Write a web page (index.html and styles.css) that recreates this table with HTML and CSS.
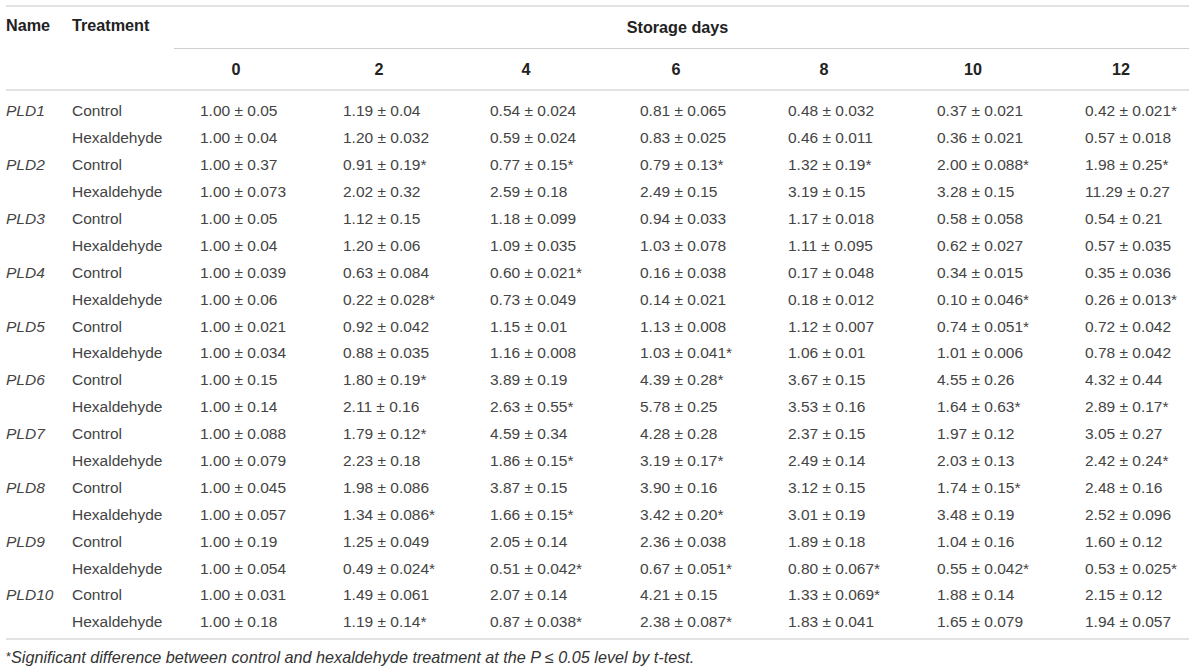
FILE: index.html
```html
<!DOCTYPE html>
<html lang="en">

<head>
    <meta charset="UTF-8">
    <meta name="viewport" content="width=device-width, initial-scale=1.0">
    <title>PLD expression during storage</title>
    <link rel="stylesheet" href="styles.css">
</head>

<body>
    <div class="container">
        <table class="data-table">
            <colgroup>
                <col class="col-name">
                <col class="col-treat">
                <col class="col-d0">
                <col class="col-d2">
                <col class="col-d4">
                <col class="col-d6">
                <col class="col-d8">
                <col class="col-d10">
                <col class="col-d12">
            </colgroup>
            <thead>
                <tr class="head-top">
                    <th class="name" rowspan="2">Name</th>
                    <th class="treat" rowspan="2">Treatment</th>
                    <th class="group" colspan="7">Storage days</th>
                </tr>
                <tr class="head-days">
                    <th class="day"><span>0</span></th>
                    <th class="day"><span>2</span></th>
                    <th class="day"><span>4</span></th>
                    <th class="day"><span>6</span></th>
                    <th class="day"><span>8</span></th>
                    <th class="day"><span>10</span></th>
                    <th class="day"><span>12</span></th>
                </tr>
            </thead>
            <tbody>
                <tr class="first">
                    <td class="gene">PLD1</td><td class="treat">Control</td>
                    <td>1.00 ± 0.05</td><td>1.19 ± 0.04</td><td>0.54 ± 0.024</td><td>0.81 ± 0.065</td><td>0.48 ± 0.032</td><td>0.37 ± 0.021</td><td>0.42 ± 0.021*</td>
                </tr>
                <tr>
                    <td class="gene"></td><td class="treat">Hexaldehyde</td>
                    <td>1.00 ± 0.04</td><td>1.20 ± 0.032</td><td>0.59 ± 0.024</td><td>0.83 ± 0.025</td><td>0.46 ± 0.011</td><td>0.36 ± 0.021</td><td>0.57 ± 0.018</td>
                </tr>
                <tr>
                    <td class="gene">PLD2</td><td class="treat">Control</td>
                    <td>1.00 ± 0.37</td><td>0.91 ± 0.19*</td><td>0.77 ± 0.15*</td><td>0.79 ± 0.13*</td><td>1.32 ± 0.19*</td><td>2.00 ± 0.088*</td><td>1.98 ± 0.25*</td>
                </tr>
                <tr>
                    <td class="gene"></td><td class="treat">Hexaldehyde</td>
                    <td>1.00 ± 0.073</td><td>2.02 ± 0.32</td><td>2.59 ± 0.18</td><td>2.49 ± 0.15</td><td>3.19 ± 0.15</td><td>3.28 ± 0.15</td><td>11.29 ± 0.27</td>
                </tr>
                <tr>
                    <td class="gene">PLD3</td><td class="treat">Control</td>
                    <td>1.00 ± 0.05</td><td>1.12 ± 0.15</td><td>1.18 ± 0.099</td><td>0.94 ± 0.033</td><td>1.17 ± 0.018</td><td>0.58 ± 0.058</td><td>0.54 ± 0.21</td>
                </tr>
                <tr>
                    <td class="gene"></td><td class="treat">Hexaldehyde</td>
                    <td>1.00 ± 0.04</td><td>1.20 ± 0.06</td><td>1.09 ± 0.035</td><td>1.03 ± 0.078</td><td>1.11 ± 0.095</td><td>0.62 ± 0.027</td><td>0.57 ± 0.035</td>
                </tr>
                <tr>
                    <td class="gene">PLD4</td><td class="treat">Control</td>
                    <td>1.00 ± 0.039</td><td>0.63 ± 0.084</td><td>0.60 ± 0.021*</td><td>0.16 ± 0.038</td><td>0.17 ± 0.048</td><td>0.34 ± 0.015</td><td>0.35 ± 0.036</td>
                </tr>
                <tr>
                    <td class="gene"></td><td class="treat">Hexaldehyde</td>
                    <td>1.00 ± 0.06</td><td>0.22 ± 0.028*</td><td>0.73 ± 0.049</td><td>0.14 ± 0.021</td><td>0.18 ± 0.012</td><td>0.10 ± 0.046*</td><td>0.26 ± 0.013*</td>
                </tr>
                <tr>
                    <td class="gene">PLD5</td><td class="treat">Control</td>
                    <td>1.00 ± 0.021</td><td>0.92 ± 0.042</td><td>1.15 ± 0.01</td><td>1.13 ± 0.008</td><td>1.12 ± 0.007</td><td>0.74 ± 0.051*</td><td>0.72 ± 0.042</td>
                </tr>
                <tr>
                    <td class="gene"></td><td class="treat">Hexaldehyde</td>
                    <td>1.00 ± 0.034</td><td>0.88 ± 0.035</td><td>1.16 ± 0.008</td><td>1.03 ± 0.041*</td><td>1.06 ± 0.01</td><td>1.01 ± 0.006</td><td>0.78 ± 0.042</td>
                </tr>
                <tr>
                    <td class="gene">PLD6</td><td class="treat">Control</td>
                    <td>1.00 ± 0.15</td><td>1.80 ± 0.19*</td><td>3.89 ± 0.19</td><td>4.39 ± 0.28*</td><td>3.67 ± 0.15</td><td>4.55 ± 0.26</td><td>4.32 ± 0.44</td>
                </tr>
                <tr>
                    <td class="gene"></td><td class="treat">Hexaldehyde</td>
                    <td>1.00 ± 0.14</td><td>2.11 ± 0.16</td><td>2.63 ± 0.55*</td><td>5.78 ± 0.25</td><td>3.53 ± 0.16</td><td>1.64 ± 0.63*</td><td>2.89 ± 0.17*</td>
                </tr>
                <tr>
                    <td class="gene">PLD7</td><td class="treat">Control</td>
                    <td>1.00 ± 0.088</td><td>1.79 ± 0.12*</td><td>4.59 ± 0.34</td><td>4.28 ± 0.28</td><td>2.37 ± 0.15</td><td>1.97 ± 0.12</td><td>3.05 ± 0.27</td>
                </tr>
                <tr>
                    <td class="gene"></td><td class="treat">Hexaldehyde</td>
                    <td>1.00 ± 0.079</td><td>2.23 ± 0.18</td><td>1.86 ± 0.15*</td><td>3.19 ± 0.17*</td><td>2.49 ± 0.14</td><td>2.03 ± 0.13</td><td>2.42 ± 0.24*</td>
                </tr>
                <tr>
                    <td class="gene">PLD8</td><td class="treat">Control</td>
                    <td>1.00 ± 0.045</td><td>1.98 ± 0.086</td><td>3.87 ± 0.15</td><td>3.90 ± 0.16</td><td>3.12 ± 0.15</td><td>1.74 ± 0.15*</td><td>2.48 ± 0.16</td>
                </tr>
                <tr>
                    <td class="gene"></td><td class="treat">Hexaldehyde</td>
                    <td>1.00 ± 0.057</td><td>1.34 ± 0.086*</td><td>1.66 ± 0.15*</td><td>3.42 ± 0.20*</td><td>3.01 ± 0.19</td><td>3.48 ± 0.19</td><td>2.52 ± 0.096</td>
                </tr>
                <tr>
                    <td class="gene">PLD9</td><td class="treat">Control</td>
                    <td>1.00 ± 0.19</td><td>1.25 ± 0.049</td><td>2.05 ± 0.14</td><td>2.36 ± 0.038</td><td>1.89 ± 0.18</td><td>1.04 ± 0.16</td><td>1.60 ± 0.12</td>
                </tr>
                <tr>
                    <td class="gene"></td><td class="treat">Hexaldehyde</td>
                    <td>1.00 ± 0.054</td><td>0.49 ± 0.024*</td><td>0.51 ± 0.042*</td><td>0.67 ± 0.051*</td><td>0.80 ± 0.067*</td><td>0.55 ± 0.042*</td><td>0.53 ± 0.025*</td>
                </tr>
                <tr>
                    <td class="gene">PLD10</td><td class="treat">Control</td>
                    <td>1.00 ± 0.031</td><td>1.49 ± 0.061</td><td>2.07 ± 0.14</td><td>4.21 ± 0.15</td><td>1.33 ± 0.069*</td><td>1.88 ± 0.14</td><td>2.15 ± 0.12</td>
                </tr>
                <tr class="last">
                    <td class="gene"></td><td class="treat">Hexaldehyde</td>
                    <td>1.00 ± 0.18</td><td>1.19 ± 0.14*</td><td>0.87 ± 0.038*</td><td>2.38 ± 0.087*</td><td>1.83 ± 0.041</td><td>1.65 ± 0.079</td><td>1.94 ± 0.057</td>
                </tr>
            </tbody>
        </table>

        <p class="footnote"><span class="mark">*</span>Significant difference between control and hexaldehyde treatment at the P ≤ 0.05 level by t-test.</p>
    </div>
</body>

</html>
```

FILE: styles.css
```css
body {
    margin: 0;
    padding: 0;
    background-color: #ffffff;
    font-family: "Liberation Sans", Arial, sans-serif;
    color: #444;
}

.container {
    width: 1183px;
    padding: 5px 0 0 6px;
}

.data-table {
    width: 1183px;
    table-layout: fixed;
    border-collapse: separate;
    border-spacing: 0;
    border-top: 2px solid #e2e2e2;
    font-size: 15.5px;
}

.col-name { width: 66px; }
.col-treat { width: 102px; }
.col-d0 { width: 143px; }
.col-d2 { width: 147px; }
.col-d4 { width: 150px; }
.col-d6 { width: 148px; }
.col-d8 { width: 149px; }
.col-d10 { width: 148px; }
.col-d12 { width: 130px; }

th {
    font-size: 16.2px;
    font-weight: bold;
    color: #222;
    padding: 0;
    text-align: left;
}

th.name, th.treat {
    vertical-align: top;
    padding-top: 9px;
    border-bottom: 2px solid #e2e2e2;
}

th.group {
    height: 41px;
    text-align: center;
    padding-right: 8px;
    border-bottom: 1px solid #cfcfcf;
}

th.day {
    height: 40px;
    padding-left: 26px;
    border-bottom: 2px solid #e2e2e2;
}

th.day span {
    display: inline-block;
    width: 72px;
    text-align: center;
}

td {
    height: 26.9px;
    padding: 0 0 0 26px;
    white-space: nowrap;
    vertical-align: middle;
}

td.gene, td.treat {
    padding-left: 0;
}

td.gene {
    font-style: italic;
}

tr.first td {
    padding-top: 7px;
}

tr.last td {
    padding-bottom: 2px;
}

.footnote {
    margin: 0;
    width: 1183px;
    padding-top: 8px;
    border-top: 2px solid #e2e2e2;
    font-size: 16.2px;
    font-style: italic;
    line-height: 18px;
    color: #333;
}

.footnote .mark {
    font-style: normal;
    font-size: 13px;
    vertical-align: top;
}
```
